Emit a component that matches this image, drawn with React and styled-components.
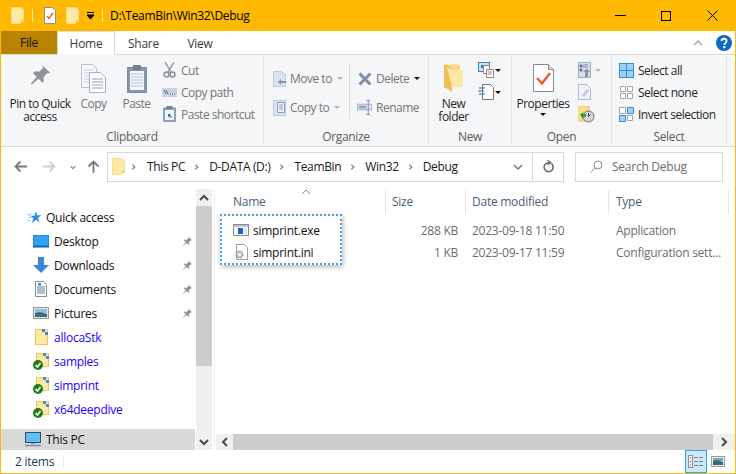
import React from 'react';
import styled, { createGlobalStyle } from 'styled-components';

const Global = createGlobalStyle`
  html, body { margin: 0; padding: 0; background: #fff; }
  body { font-family: "Open Sans", "Noto Sans", sans-serif; font-size: 12px; letter-spacing: -0.25px; }
  * { box-sizing: border-box; }
`;

const Win = styled.div`
  width: 736px;
  height: 474px;
  display: flex;
  flex-direction: column;
  border: 1px solid #ffb900;
  border-top: 0;
  background: #fff;
  overflow: hidden;
`;

const TitleBar = styled.div`
  height: 31px;
  flex: none;
  background: #ffb900;
  display: flex;
  align-items: center;
  padding-left: 10px;
  color: #000;
`;
const QuickIcon = styled.div`
  display: flex;
  margin-right: ${(p) => p.$gap}px;
`;
const TitleSep = styled.div`
  width: 1px;
  height: 13px;
  background: #ffeaa8;
  margin-right: ${(p) => p.$gap}px;
`;
const TitleText = styled.div`
  flex: 1;
  letter-spacing: -0.3px;
`;
const WinBtn = styled.div`
  width: 46px;
  height: 30px;
  display: flex;
  align-items: center;
  justify-content: center;
`;

const TabRow = styled.div`
  height: 24px;
  flex: none;
  display: flex;
  align-items: stretch;
  border-bottom: 1px solid #dadbdc;
  background: #fff;
`;
const FileTab = styled.div`
  width: 56px;
  height: 23px;
  background: #b78300;
  color: #111;
  display: flex;
  align-items: center;
  justify-content: center;
`;
const Tab = styled.div`
  width: ${(p) => p.$w}px;
  height: ${(p) => (p.$active ? 24 : 23)}px;
  display: flex;
  align-items: center;
  justify-content: center;
  background: #fff;
  color: #3b3b3b;
  border: 1px solid ${(p) => (p.$active ? '#dadbdc' : 'transparent')};
  border-bottom: 0;
`;
const TabSpacer = styled.div`
  flex: 1;
`;
const TabEnd = styled.div`
  display: flex;
  align-items: center;
  gap: 13px;
  padding-right: 3px;
`;

const Ribbon = styled.div`
  height: 92px;
  flex: none;
  display: flex;
  background: #f5f6f7;
  border-bottom: 1px solid #dadbdc;
  padding-top: 2px;
  letter-spacing: -0.5px;
`;
const Group = styled.div`
  width: ${(p) => p.$w}px;
  height: 86px;
  display: flex;
  flex-direction: column;
  border-right: 1px solid #e2e3e4;
`;
const GroupBody = styled.div`
  flex: 1;
  min-height: 0;
  display: flex;
  padding-left: ${(p) => p.$pl || 0}px;
`;
const GroupLabel = styled.div`
  height: 16px;
  line-height: 20px;
  text-align: center;
  color: #5c5c5c;
  letter-spacing: -0.35px;
`;
const LargeBtn = styled.div`
  width: ${(p) => p.$w}px;
  display: flex;
  flex-direction: column;
  align-items: center;
  padding-top: 7px;
  line-height: 13px;
  text-align: center;
  white-space: nowrap;
  color: ${(p) => (p.$off ? '#767676' : '#262626')};
`;
const LargeIcon = styled.div`
  height: 33px;
  flex: none;
  display: flex;
  align-items: flex-start;
  justify-content: center;
`;
const PropsCaret = styled.div`
  height: 9px;
  display: flex;
  align-items: center;
`;
const SmallCol = styled.div`
  display: flex;
  flex-direction: column;
  width: ${(p) => (p.$w ? `${p.$w}px` : 'auto')};
  padding-top: ${(p) => p.$top ?? 2}px;
  margin-left: ${(p) => p.$ml || 0}px;
`;
const SmallItem = styled.div`
  height: ${(p) => p.$h || 22}px;
  display: flex;
  align-items: center;
  gap: 4px;
  white-space: nowrap;
  color: ${(p) => (p.$off ? '#767676' : '#262626')};
`;
const IconCell = styled.div`
  width: ${(p) => p.$w || 15}px;
  display: flex;
  justify-content: center;
  flex: none;
`;
const Caret = styled.span`
  width: 0;
  height: 0;
  flex: none;
  margin-left: ${(p) => p.$ml || 0}px;
  border-style: solid;
  border-color: ${(p) => (p.$off ? '#b9b9b9' : '#111')} transparent transparent;
  border-width: 3px 3px 0;
`;
const VRule = styled.div`
  width: 1px;
  height: 55px;
  background: #dcdddf;
  margin: 7px 7px 0 8px;
`;

const NavRow = styled.div`
  height: 39px;
  flex: none;
  display: flex;
  align-items: center;
  padding: 0 12px 0 6px;
`;
const NavBtn = styled.div`
  width: ${(p) => p.$w}px;
  display: flex;
  justify-content: center;
`;
const AddressBox = styled.div`
  width: 457px;
  height: 30px;
  display: flex;
  align-items: center;
  border: 1px solid #d9d9d9;
  padding-left: 4px;
  color: #1a1a1a;
  letter-spacing: -0.35px;
`;
const Crumb = styled.span`
  margin-left: ${(p) => p.$ml}px;
`;
const CrumbArrow = styled.span`
  margin-left: ${(p) => p.$ml}px;
  display: flex;
`;
const AddrEnd = styled.div`
  margin-left: auto;
  display: flex;
  align-items: center;
  height: 100%;
`;
const AddrDrop = styled.div`
  width: 29px;
  display: flex;
  justify-content: center;
`;
const AddrRefresh = styled.div`
  width: 31px;
  height: 100%;
  border-left: 1px solid #d9d9d9;
  display: flex;
  align-items: center;
  justify-content: center;
`;
const SearchBox = styled.div`
  width: 148px;
  height: 30px;
  margin-left: 11px;
  border: 1px solid #d9d9d9;
  display: flex;
  align-items: center;
  padding-left: 14px;
  gap: 9px;
  color: #6d6d6d;
`;

const Main = styled.div`
  height: 264px;
  flex: none;
  display: flex;
`;
const Sidebar = styled.div`
  width: 194px;
  padding-top: 19px;
  overflow: hidden;
  flex: none;
`;
const NavItem = styled.div`
  height: ${(p) => (p.$pc ? 21 : 24)}px;
  margin-top: ${(p) => (p.$pc ? 8 : 0)}px;
  display: flex;
  align-items: center;
  padding-left: ${(p) => p.$indent}px;
  padding-right: 2px;
  background: ${(p) => (p.$pc ? '#d9d9d9' : 'transparent')};
  color: ${(p) => (p.$link ? '#2200ff' : '#111')};
`;
const NavIcon = styled.div`
  width: ${(p) => p.$w}px;
  margin-right: ${(p) => p.$gap}px;
  flex: none;
  display: flex;
  justify-content: center;
`;
const NavPin = styled.div`
  margin-left: auto;
  display: flex;
`;
const VScroll = styled.div`
  width: 16px;
  margin: 3px 0 0 1px;
  flex: none;
  display: flex;
  flex-direction: column;
  background: #f0f0f0;
`;
const ScrollBtn = styled.div`
  width: ${(p) => p.$w || '100%'};
  height: ${(p) => p.$h || '17px'};
  flex: none;
  background: #f0f0f0;
  display: flex;
  align-items: center;
  justify-content: center;
`;
const VThumb = styled.div`
  height: 160px;
  flex: none;
  background: #cdcdcd;
`;
const VTrack = styled.div`
  flex: 1;
`;
const PaneRule = styled.div`
  width: 1px;
  margin: 3px 1px 0 2px;
  background: #f0f0f0;
  flex: none;
`;
const Pane = styled.div`
  flex: 1;
  min-width: 0;
  display: flex;
  flex-direction: column;
`;
const List = styled.div`
  flex: 1;
  position: relative;
`;
const SortMark = styled.div`
  position: absolute;
  left: 85px;
  top: 2px;
  display: flex;
`;
const HeaderRow = styled.div`
  display: grid;
  grid-template-columns: 170px 80px 143px 120px;
  height: 28px;
  padding-top: 4px;
  margin-bottom: 5px;
`;
const HeaderCell = styled.div`
  height: 24px;
  line-height: 24px;
  padding-left: ${(p) => p.$pl}px;
  color: #4c607a;
  border-right: 1px solid #e5e5e5;
`;
const FileRow = styled.div`
  display: grid;
  grid-template-columns: 170px 80px 143px 120px;
  height: 22px;
  align-items: center;
  color: #6d6d6d;
`;
const NameCell = styled.div`
  display: flex;
  align-items: center;
  padding-left: 17px;
  gap: 4px;
  color: #111;
`;
const FileIcon = styled.div`
  width: 16px;
  display: flex;
  justify-content: center;
`;
const SizeCell = styled.div`
  text-align: right;
  padding-right: 8px;
`;
const DetailCell = styled.div`
  padding-left: ${(p) => p.$pl}px;
  white-space: nowrap;
`;
const Lasso = styled.div`
  position: absolute;
  left: 4px;
  top: 28px;
  width: 122px;
  height: 51px;
  border: 2px dotted #3ba2f0;
  box-shadow: 1px 2px 5px rgba(0, 0, 0, 0.28);
`;
const HScroll = styled.div`
  height: 16px;
  flex: none;
  display: flex;
  background: #f0f0f0;
`;
const HThumb = styled.div`
  flex: 1;
  background: #cdcdcd;
`;

const StatusBar = styled.div`
  flex: 1;
  display: flex;
  align-items: center;
  padding-left: 14px;
  color: #1e395b;
`;
const StatusSep = styled.div`
  width: 1px;
  height: 14px;
  margin-left: 9px;
  background: #ececec;
`;
const StatusViews = styled.div`
  margin-left: auto;
  height: 100%;
  display: flex;
  align-items: center;
  padding-right: 7px;
`;
const ViewBtn = styled.div`
  width: ${(p) => p.$w}px;
  height: 23px;
  display: flex;
  align-items: center;
  justify-content: center;
  background: ${(p) => (p.$on ? '#cce8ff' : 'transparent')};
  border: 1px solid ${(p) => (p.$on ? '#35a5dd' : 'transparent')};
`;

// --- drawings ---
const PaleFolder = ({ w = 13, h = 17 }) => (
  <svg width={w} height={h} viewBox="0 0 13 17">
    <path d="M.5.5h9l3 2v12h-3v2h-9z" fill="#ffe9a3" stroke="#f7dd8b" />
    <path d="M10 14.5h2.5v-2H10z" fill="#f3c95e" />
  </svg>
);
const PropsIcon = ({ w = 12, h = 17 }) => (
  <svg width={w} height={h} viewBox="0 0 12 17">
    <path d="M.5.5h8l3 3v13H.5z" fill="#fff" stroke="#8f8f8f" />
    <path d="M3 9l2 2.4L9 6" fill="none" stroke="#e8562a" strokeWidth="1.5" />
  </svg>
);
const BigProps = () => (
  <svg width="21" height="28" viewBox="0 0 21 28">
    <path d="M.5.5h15l5 5v22H.5z" fill="#fff" stroke="#8a8a8a" />
    <path d="M15.5.5v5h5" fill="#ddd" stroke="#8a8a8a" />
    <path d="M4 14l5 5.5L17 9" fill="none" stroke="#e8562a" strokeWidth="2.4" />
  </svg>
);
const Pin = () => (
  <svg width="21" height="23" viewBox="0 0 22 24">
    <path d="M13 1l8 8-2 1-1-.5-4 4.500.5 4-1.500 1.500-4-4-7 6-1-1 6-7-4-4L5.500 7.500l4 .5 4.500-4L13.500 3z" fill="#8e9499" />
  </svg>
);
const SmallPin = () => (
  <svg width="11" height="11" viewBox="0 0 22 24">
    <path d="M13 1l8 8-2 1-1-.5-4 4.500.5 4-1.500 1.500-4-4-7 6-1-1 6-7-4-4L5.500 7.500l4 .5 4.500-4L13.500 3z" fill="#8e9499" />
  </svg>
);
const CopyBig = () => (
  <svg width="25" height="29" viewBox="0 0 25 29">
    <path d="M.5.5h11l4 4v19H.5z" fill="#f4f6f9" stroke="#b4bfd0" />
    <path d="M3 6h9M3 9h9M3 12h9M3 15h9M3 18h9" stroke="#c8d2e2" />
    <path d="M8.500 8.500h11l5 5v15h-16z" fill="#fff" stroke="#a3b0c4" />
    <path d="M11 15h11M11 18h11M11 21h11M11 24h11" stroke="#8ea0bc" />
  </svg>
);
const PasteBig = () => (
  <svg width="20" height="29" viewBox="0 0 20 29">
    <rect x=".5" y="3.500" width="19" height="25" fill="#8797ad" stroke="#7a8aa0" />
    <rect x="3" y="7" width="14" height="19" fill="#f3f6fa" />
    <path d="M4 10h12M4 13h12M4 16h12M4 19h12M4 22h12" stroke="#b9c6d9" />
    <rect x="6" y="1" width="8" height="5" fill="#6e7f97" />
  </svg>
);
const Scissors = () => (
  <svg width="13" height="16" viewBox="0 0 13 16">
    <path d="M2 0l6 10M11 0L5 10" stroke="#98a4b5" strokeWidth="1.600" fill="none" />
    <circle cx="3.500" cy="12.500" r="2.500" fill="none" stroke="#7f8fa6" strokeWidth="1.400" />
    <circle cx="9.500" cy="12.500" r="2.500" fill="none" stroke="#7f8fa6" strokeWidth="1.400" />
  </svg>
);
const CopyPath = () => (
  <svg width="15" height="9" viewBox="0 0 15 9">
    <rect width="15" height="9" fill="#c9d3e3" />
    <path d="M2 2l2 4M4 2l2 4" stroke="#5a6d8a" />
    <path d="M8 6h1M10 6h1M12 6h1" stroke="#5a6d8a" />
  </svg>
);
const PasteShortcut = () => (
  <svg width="13" height="16" viewBox="0 0 13 16">
    <rect y="1.500" width="13" height="14.500" fill="#8da0b9" />
    <rect x="2" y="4" width="9" height="10" fill="#f1f4f8" />
    <rect x="3.500" width="6" height="3" fill="#6e7f97" />
    <path d="M5 12V8h3l-1 1 2 2-1 1-2-2z" fill="#55667f" />
  </svg>
);
const MoveTo = () => (
  <svg width="13" height="16" viewBox="0 0 13 16">
    <path d="M.5.500h7l5 3v12H.500z" fill="#dbe4f0" stroke="#bccadd" />
    <path d="M5 11l3-3v2h5v2H8v2z" fill="#8094b0" />
  </svg>
);
const CopyTo = () => (
  <svg width="13" height="16" viewBox="0 0 13 16">
    <rect x=".5" y=".5" width="12" height="15" fill="#dbe4f0" stroke="#bccadd" />
    <path d="M4.500 2.500h7v10h-7z" fill="#eef2f7" stroke="#8ea0bb" />
    <path d="M6 5h4M6 7h4M6 9h4" stroke="#8ea0bb" />
  </svg>
);
const DeleteX = () => (
  <svg width="14" height="14" viewBox="0 0 14 14">
    <path d="M1.500 1.500l11 11M12.500 1.500l-11 11" stroke="#7d8ea8" strokeWidth="3" />
  </svg>
);
const Rename = () => (
  <svg width="15" height="15" viewBox="0 0 16 16">
    <rect x=".5" y="4.500" width="15" height="6" fill="#dfe6f0" stroke="#9cacc3" />
    <rect x="2" y="6" width="8" height="3" fill="#8fa1bb" />
    <path d="M10 .5h4M12 .5v15M10 15.500h4" stroke="#7d8ea8" fill="none" />
  </svg>
);
const BigFolder = () => (
  <svg width="20" height="28" viewBox="0 0 20 28">
    <path d="M3 .5h13v21H3z" fill="#f9db85" />
    <path d="M0 1l3-.5 5 5V28l-6-4H0z" fill="#eec05a" />
    <path d="M3 3l5 3h11v17H8z" fill="#fde7a4" />
  </svg>
);
const NewItem = () => (
  <svg width="16" height="16" viewBox="0 0 16 16">
    <rect x=".5" y=".5" width="11" height="9" fill="#cfe2f5" stroke="#3b83bd" />
    <rect x="3" y="3" width="3" height="3" fill="#3b83bd" />
    <path d="M5.500 3.500h6v8h-6z" fill="#fff" stroke="#888" />
    <path d="M8.500 7.500h7v8h-7z" fill="#fff" stroke="#888" />
    <path d="M10 10h4M10 12h4" stroke="#e06c6c" />
  </svg>
);
const EasyAccess = () => (
  <svg width="16" height="16" viewBox="0 0 16 16">
    <path d="M4.500.5h8l3 3v12h-11z" fill="#fff" stroke="#777" />
    <path d="M1 4h6M0 7h6M1 10h6" stroke="#2d6da5" strokeWidth="1.200" />
  </svg>
);
const OpenIcon = () => (
  <svg width="13" height="16" viewBox="0 0 13 16">
    <path d="M.5.500h12v15H.500z" fill="#d5deeb" stroke="#9cadc4" />
    <path d="M2 3h2v2H2zM2 7h2v2H2zM5 3h5M5 5h5" stroke="#7d8ea8" />
    <path d="M7 15V10H5l3.500-3.500L12 10h-2v5z" fill="#8094b0" />
  </svg>
);
const EditIcon = () => (
  <svg width="13" height="16" viewBox="0 0 13 16">
    <path d="M.500.500h8l4 4v11h-12z" fill="#eff3f8" stroke="#aebcd0" />
    <path d="M4 11l5-6 2 1.500-5 6z" fill="#c0cbdc" />
  </svg>
);
const HistoryIcon = () => (
  <svg width="17" height="17" viewBox="0 0 17 17">
    <rect y="0" width="11" height="15" fill="#fbe18e" stroke="#eec75a" />
    <circle cx="10.500" cy="10.500" r="5.500" fill="#d6d6d6" stroke="#6d6d6d" />
    <path d="M10.500 7v3.500l2-2" stroke="#444" fill="none" />
    <path d="M2 9l3-3v2h3v3H5v2z" fill="#2e9e37" />
  </svg>
);
const SelectAll = () => (
  <svg width="15" height="15" viewBox="0 0 15 15">
    <rect x=".5" y=".5" width="14" height="14" fill="#9dd0f5" stroke="#2e8fd8" />
    <path d="M7.500 0v15M0 7.500h15" stroke="#2e8fd8" />
  </svg>
);
const SelectNone = () => (
  <svg width="15" height="15" viewBox="0 0 15 15">
    <path d="M1.500 1.500h5v5h-5zM8.500 1.500h5v5h-5zM1.500 8.500h5v5h-5zM8.500 8.500h5v5h-5z" fill="#fff" stroke="#a5a5a5" />
  </svg>
);
const SelectInvert = () => (
  <svg width="15" height="15" viewBox="0 0 15 15">
    <path d="M1 .5h5.500v6h-6v-6zM8.500 8.500h5v5h-5z" fill="#fff" stroke="#a5a5a5" />
    <path d="M8.500.5h6v6h-6zM.5 8.500h6v6h-6z" fill="#9dd0f5" stroke="#2e8fd8" />
  </svg>
);
const Help = () => (
  <svg width="16" height="16" viewBox="0 0 16 16">
    <circle cx="8" cy="8" r="8" fill="#0f69c2" />
    <path d="M5.600 6c0-3 5-3 5 0 0 2-2.300 1.800-2.300 4" fill="none" stroke="#fff" strokeWidth="1.900" />
    <rect x="7.200" y="11" width="2.200" height="2.200" fill="#fff" />
  </svg>
);
const Chev = ({ d, w = 10, h = 10, c = '#5f5f5f', s = 1.5 }) => (
  <svg width={w} height={h} viewBox="0 0 10 10">
    <path d={d} fill="none" stroke={c} strokeWidth={s} />
  </svg>
);
const Star = () => (
  <svg width="15" height="13" viewBox="0 0 15 14">
    <path d="M9 0l1.500 4.500H15l-3.700 2.800 1.400 5-3.700-3-4.500 4 1.800-5.500L3 5h4.500z" fill="#2b8fe8" />
    <path d="M0 4h4M1 7h3M0 10h3" stroke="#7cc0f5" />
  </svg>
);
const DesktopIc = () => (
  <svg width="16" height="13" viewBox="0 0 16 13">
    <rect width="16" height="12" fill="#1a8fe6" />
    <rect x="1" y="1" width="14" height="9" fill="#35a2f0" />
    <rect y="11" width="16" height="1.500" fill="#0d5fa8" />
  </svg>
);
const DownIc = () => (
  <svg width="16" height="16" viewBox="0 0 16 16">
    <path d="M5 0h6v8h5l-8 8-8-8h5z" fill="#3a86d8" />
  </svg>
);
const DocsIc = () => (
  <svg width="12" height="16" viewBox="0 0 12 16">
    <path d="M.5.500h8l3 3v12H.500z" fill="#fff" stroke="#8c8c8c" />
    <path d="M2 6h8M2 8h8M2 10h8M2 12h8" stroke="#5d7f9e" />
    <path d="M3 2h3v2.500H3z" fill="#2f8fd8" />
  </svg>
);
const PicsIc = () => (
  <svg width="16" height="12" viewBox="0 0 16 12">
    <rect x=".5" y=".5" width="15" height="11" fill="#d5e7f5" stroke="#9b9b9b" />
    <path d="M2 2h12v4H2z" fill="#8dbfe8" />
    <path d="M2 6l5-1 7 2v3H2z" fill="#3f6e63" />
  </svg>
);
const ProjFolder = () => (
  <svg width="13" height="16" viewBox="0 0 13 16">
    <path d="M.500.500h12v15H.500z" fill="#fee9a2" stroke="#efc655" />
    <rect x="7" y="0" width="3" height="3" fill="#4287d6" />
    <rect x="10" y="3" width="3" height="3" fill="#4287d6" />
  </svg>
);
const SyncedFolder = () => (
  <svg width="16" height="17" viewBox="0 0 16 17">
    <path d="M3.500.500h12v13h-12z" fill="#fee9a2" stroke="#efc655" />
    <rect x="10" y="0" width="3" height="3" fill="#4287d6" />
    <rect x="13" y="3" width="3" height="3" fill="#4287d6" />
    <circle cx="5" cy="12" r="5" fill="#1d7d12" />
    <path d="M2.500 12l2 2 3-4" fill="none" stroke="#fff" strokeWidth="1.600" />
  </svg>
);
const PcIc = () => (
  <svg width="16" height="15" viewBox="0 0 16 15">
    <rect x=".5" y=".5" width="15" height="10" fill="#5cc0f5" stroke="#3a4d66" />
    <path d="M6 11h4v1H6z" fill="#8a97a8" />
    <path d="M0 13.500h16" stroke="#7b8ea8" strokeWidth="1.500" />
  </svg>
);
const ExeIc = () => (
  <svg width="16" height="12" viewBox="0 0 16 12">
    <rect x=".5" y=".5" width="15" height="11" fill="#fff" stroke="#8a8a8a" />
    <rect x="1" y="1" width="14" height="2" fill="#b8c4d2" />
    <rect x="5" y="4" width="5" height="6" fill="#1668c8" />
    <path d="M11 5h3M11 7h3M11 9h3" stroke="#c4c4c4" />
  </svg>
);
const IniIc = () => (
  <svg width="14" height="16" viewBox="0 0 14 16">
    <path d="M2.500.500h8l3 3v12h-11z" fill="#fff" stroke="#a0a0a0" />
    <circle cx="5.500" cy="10.500" r="3.500" fill="#c8c8c8" stroke="#808080" strokeDasharray="2 1" />
    <circle cx="5.500" cy="10.500" r="1.200" fill="#fff" />
  </svg>
);
const Magnifier = () => (
  <svg width="13" height="13" viewBox="0 0 13 13">
    <circle cx="8" cy="5" r="4" fill="none" stroke="#8a8a8a" />
    <path d="M5 8l-4.500 4.500" stroke="#b58a6a" />
  </svg>
);
const Refresh = () => (
  <svg width="11" height="13" viewBox="0 0 11 13">
    <path d="M8.500 3.700a4.500 4.500 0 1 1-3-1H7" fill="none" stroke="#6d6d6d" strokeWidth="1.600" />
    <path d="M4.500 0L8 2.700 4.500 5" fill="none" stroke="#6d6d6d" strokeWidth="1.200" />
  </svg>
);
const ArrowNav = ({ d, c }) => (
  <svg width="13" height="13" viewBox="0 0 13 13">
    <path d={d} fill="none" stroke={c} strokeWidth="1.800" />
  </svg>
);
const DetailsView = () => (
  <svg width="16" height="13" viewBox="0 0 16 13">
    <rect x=".5" y=".5" width="4" height="12" fill="#f5f5f5" stroke="#8f8f8f" />
    <path d="M2 3h1M2 6.500h1M2 10h1" stroke="#7a3a3a" />
    <path d="M6 2.500h4M11 2.500h4M6 6.500h4M11 6.500h4M6 10.500h4M11 10.500h4" stroke="#7f7f7f" />
  </svg>
);
const ThumbView = () => (
  <svg width="14" height="11" viewBox="0 0 14 11">
    <rect x=".5" y=".5" width="13" height="10" fill="#e5eef7" stroke="#9b9b9b" />
    <rect x="2" y="2" width="10" height="3" fill="#6ba7dc" />
    <path d="M2 5l4-1 6 2v3H2z" fill="#3e6b5e" />
  </svg>
);
const CrumbSep = () => <Chev d="M3 2l3 3-3 3" w={8} h={8} c="#7a7a7a" />;

const up = 'M1 7l4-4 4 4';
const down = 'M1 3l4 4 4-4';

export default function App() {
  return (
    <>
      <Global />
      <Win>
        <TitleBar>
          <QuickIcon $gap={8}><PaleFolder /></QuickIcon>
          <TitleSep $gap={11} />
          <QuickIcon $gap={10}><PropsIcon /></QuickIcon>
          <QuickIcon $gap={7}><PaleFolder /></QuickIcon>
          <QuickIcon $gap={7}>
            <svg width="9" height="8" viewBox="0 0 9 8"><path d="M1 .5h7M1 3l3.500 4L8 3z" stroke="#000" fill="#000" /></svg>
          </QuickIcon>
          <TitleSep $gap={7} />
          <TitleText>D:\TeamBin\Win32\Debug</TitleText>
          <WinBtn><svg width="11" height="1"><rect width="11" height="1" fill="#000" /></svg></WinBtn>
          <WinBtn><svg width="10" height="10"><rect x=".5" y=".5" width="9" height="9" fill="none" stroke="#000" /></svg></WinBtn>
          <WinBtn><svg width="11" height="11"><path d="M.5.500l10 10M10.500.500l-10 10" stroke="#000" /></svg></WinBtn>
        </TitleBar>

        <TabRow>
          <FileTab>File</FileTab>
          <Tab $w={58} $active>Home</Tab>
          <Tab $w={57}>Share</Tab>
          <Tab $w={56}>View</Tab>
          <TabSpacer />
          <TabEnd>
            <Chev d={up} c="#a5a5a5" />
            <Help />
          </TabEnd>
        </TabRow>

        <Ribbon>
          <Group $w={263}>
            <GroupBody $pl={8}>
              <LargeBtn $w={62}><LargeIcon><Pin /></LargeIcon>Pin to Quick<br />access</LargeBtn>
              <LargeBtn $w={45} $off><LargeIcon><CopyBig /></LargeIcon>Copy</LargeBtn>
              <LargeBtn $w={41} $off><LargeIcon><PasteBig /></LargeIcon>Paste</LargeBtn>
              <SmallCol $ml={5}>
                <SmallItem $off><IconCell><Scissors /></IconCell>Cut</SmallItem>
                <SmallItem $off><IconCell><CopyPath /></IconCell>Copy path</SmallItem>
                <SmallItem $off><IconCell><PasteShortcut /></IconCell>Paste shortcut</SmallItem>
              </SmallCol>
            </GroupBody>
            <GroupLabel>Clipboard</GroupLabel>
          </Group>

          <Group $w={165}>
            <GroupBody $pl={8}>
              <SmallCol $top={7} $w={69}>
                <SmallItem $h={29} $off><IconCell $w={14}><MoveTo /></IconCell>Move to<Caret $off $ml={1} /></SmallItem>
                <SmallItem $h={29} $off><IconCell $w={14}><CopyTo /></IconCell>Copy to<Caret $off $ml={1} /></SmallItem>
              </SmallCol>
              <VRule />
              <SmallCol $top={7}>
                <SmallItem $h={29} $off><IconCell><DeleteX /></IconCell>Delete<Caret $ml={1} /></SmallItem>
                <SmallItem $h={29} $off><IconCell><Rename /></IconCell>Rename</SmallItem>
              </SmallCol>
            </GroupBody>
            <GroupLabel>Organize</GroupLabel>
          </Group>

          <Group $w={83}>
            <GroupBody>
              <LargeBtn $w={49}><LargeIcon><BigFolder /></LargeIcon>New<br />folder</LargeBtn>
              <SmallCol>
                <SmallItem><NewItem /><Caret $ml={-3} /></SmallItem>
                <SmallItem><EasyAccess /><Caret $ml={-3} /></SmallItem>
              </SmallCol>
            </GroupBody>
            <GroupLabel>New</GroupLabel>
          </Group>

          <Group $w={100}>
            <GroupBody>
              <LargeBtn $w={62}>
                <LargeIcon><BigProps /></LargeIcon>
                Properties
                <PropsCaret><Caret /></PropsCaret>
              </LargeBtn>
              <SmallCol $ml={4}>
                <SmallItem $off><OpenIcon /><Caret $off /></SmallItem>
                <SmallItem><EditIcon /></SmallItem>
                <SmallItem><HistoryIcon /></SmallItem>
              </SmallCol>
            </GroupBody>
            <GroupLabel>Open</GroupLabel>
          </Group>

          <Group $w={115}>
            <GroupBody $pl={7}>
              <SmallCol>
                <SmallItem><SelectAll />Select all</SmallItem>
                <SmallItem><SelectNone />Select none</SmallItem>
                <SmallItem><SelectInvert />Invert selection</SmallItem>
              </SmallCol>
            </GroupBody>
            <GroupLabel>Select</GroupLabel>
          </Group>
        </Ribbon>

        <NavRow>
          <NavBtn $w={26}><ArrowNav d="M13 6.500H1.500M6.500 1.500l-5 5 5 5" c="#7a7a7a" /></NavBtn>
          <NavBtn $w={33}><ArrowNav d="M0 6.500h11.500M6.500 1.500l5 5-5 5" c="#d0d0d0" /></NavBtn>
          <NavBtn $w={14}><Chev d="M2 4l3 3 3-3" w={8} h={8} c="#8a8a8a" /></NavBtn>
          <NavBtn $w={27}><ArrowNav d="M6.500 13V1.500M1.500 6.500l5-5 5 5" c="#7a7a7a" /></NavBtn>
          <AddressBox>
            <PaleFolder />
            <CrumbArrow $ml={5}><CrumbSep /></CrumbArrow>
            <Crumb $ml={9}>This PC</Crumb>
            <CrumbArrow $ml={8}><CrumbSep /></CrumbArrow>
            <Crumb $ml={8}>D-DATA (D:)</Crumb>
            <CrumbArrow $ml={8}><CrumbSep /></CrumbArrow>
            <Crumb $ml={8}>TeamBin</Crumb>
            <CrumbArrow $ml={8}><CrumbSep /></CrumbArrow>
            <Crumb $ml={8}>Win32</Crumb>
            <CrumbArrow $ml={8}><CrumbSep /></CrumbArrow>
            <Crumb $ml={8}>Debug</Crumb>
            <AddrEnd>
              <AddrDrop><Chev d={down} c="#7a7a7a" /></AddrDrop>
              <AddrRefresh><Refresh /></AddrRefresh>
            </AddrEnd>
          </AddressBox>
          <SearchBox><Magnifier />Search Debug</SearchBox>
        </NavRow>

        <Main>
          <Sidebar>
            <NavItem $indent={26}><NavIcon $w={15} $gap={4}><Star /></NavIcon>Quick access</NavItem>
            <NavItem $indent={32}><NavIcon $w={16} $gap={5}><DesktopIc /></NavIcon>Desktop<NavPin><SmallPin /></NavPin></NavItem>
            <NavItem $indent={32}><NavIcon $w={16} $gap={5}><DownIc /></NavIcon>Downloads<NavPin><SmallPin /></NavPin></NavItem>
            <NavItem $indent={32}><NavIcon $w={16} $gap={5}><DocsIc /></NavIcon>Documents<NavPin><SmallPin /></NavPin></NavItem>
            <NavItem $indent={32}><NavIcon $w={16} $gap={5}><PicsIc /></NavIcon>Pictures<NavPin><SmallPin /></NavPin></NavItem>
            <NavItem $indent={32} $link><NavIcon $w={16} $gap={5}><ProjFolder /></NavIcon>allocaStk</NavItem>
            <NavItem $indent={32} $link><NavIcon $w={16} $gap={5}><SyncedFolder /></NavIcon>samples</NavItem>
            <NavItem $indent={32} $link><NavIcon $w={16} $gap={5}><SyncedFolder /></NavIcon>simprint</NavItem>
            <NavItem $indent={32} $link><NavIcon $w={16} $gap={5}><SyncedFolder /></NavIcon>x64deepdive</NavItem>
            <NavItem $indent={24} $pc><NavIcon $w={16} $gap={5}><PcIc /></NavIcon>This PC</NavItem>
          </Sidebar>
          <VScroll>
            <ScrollBtn><Chev d={up} c="#4a4a4a" s={2} /></ScrollBtn>
            <VThumb />
            <VTrack />
            <ScrollBtn><Chev d={down} c="#4a4a4a" s={2} /></ScrollBtn>
          </VScroll>
          <PaneRule />
          <Pane>
            <List>
              <SortMark><Chev d="M1 6l4-4 4 4" c="#8a8a8a" s={1} /></SortMark>
              <HeaderRow>
                <HeaderCell $pl={17}>Name</HeaderCell>
                <HeaderCell $pl={6}>Size</HeaderCell>
                <HeaderCell $pl={6}>Date modified</HeaderCell>
                <HeaderCell $pl={7}>Type</HeaderCell>
              </HeaderRow>
              <FileRow>
                <NameCell><FileIcon><ExeIc /></FileIcon>simprint.exe</NameCell>
                <SizeCell>288 KB</SizeCell>
                <DetailCell $pl={6}>2023-09-18 11:50</DetailCell>
                <DetailCell $pl={7}>Application</DetailCell>
              </FileRow>
              <FileRow>
                <NameCell><FileIcon><IniIc /></FileIcon>simprint.ini</NameCell>
                <SizeCell>1 KB</SizeCell>
                <DetailCell $pl={6}>2023-09-17 11:59</DetailCell>
                <DetailCell $pl={7}>Configuration sett...</DetailCell>
              </FileRow>
              <Lasso />
            </List>
            <HScroll>
              <ScrollBtn $w="17px" $h="16px"><Chev d="M7 1L3 5l4 4" c="#4a4a4a" s={2} /></ScrollBtn>
              <HThumb />
              <ScrollBtn $w="22px" $h="16px"><Chev d="M3 1l4 4-4 4" c="#4a4a4a" s={2} /></ScrollBtn>
            </HScroll>
          </Pane>
        </Main>

        <StatusBar>
          2 items
          <StatusSep />
          <StatusViews>
            <ViewBtn $w={22} $on><DetailsView /></ViewBtn>
            <ViewBtn $w={21}><ThumbView /></ViewBtn>
          </StatusViews>
        </StatusBar>
      </Win>
    </>
  );
}
